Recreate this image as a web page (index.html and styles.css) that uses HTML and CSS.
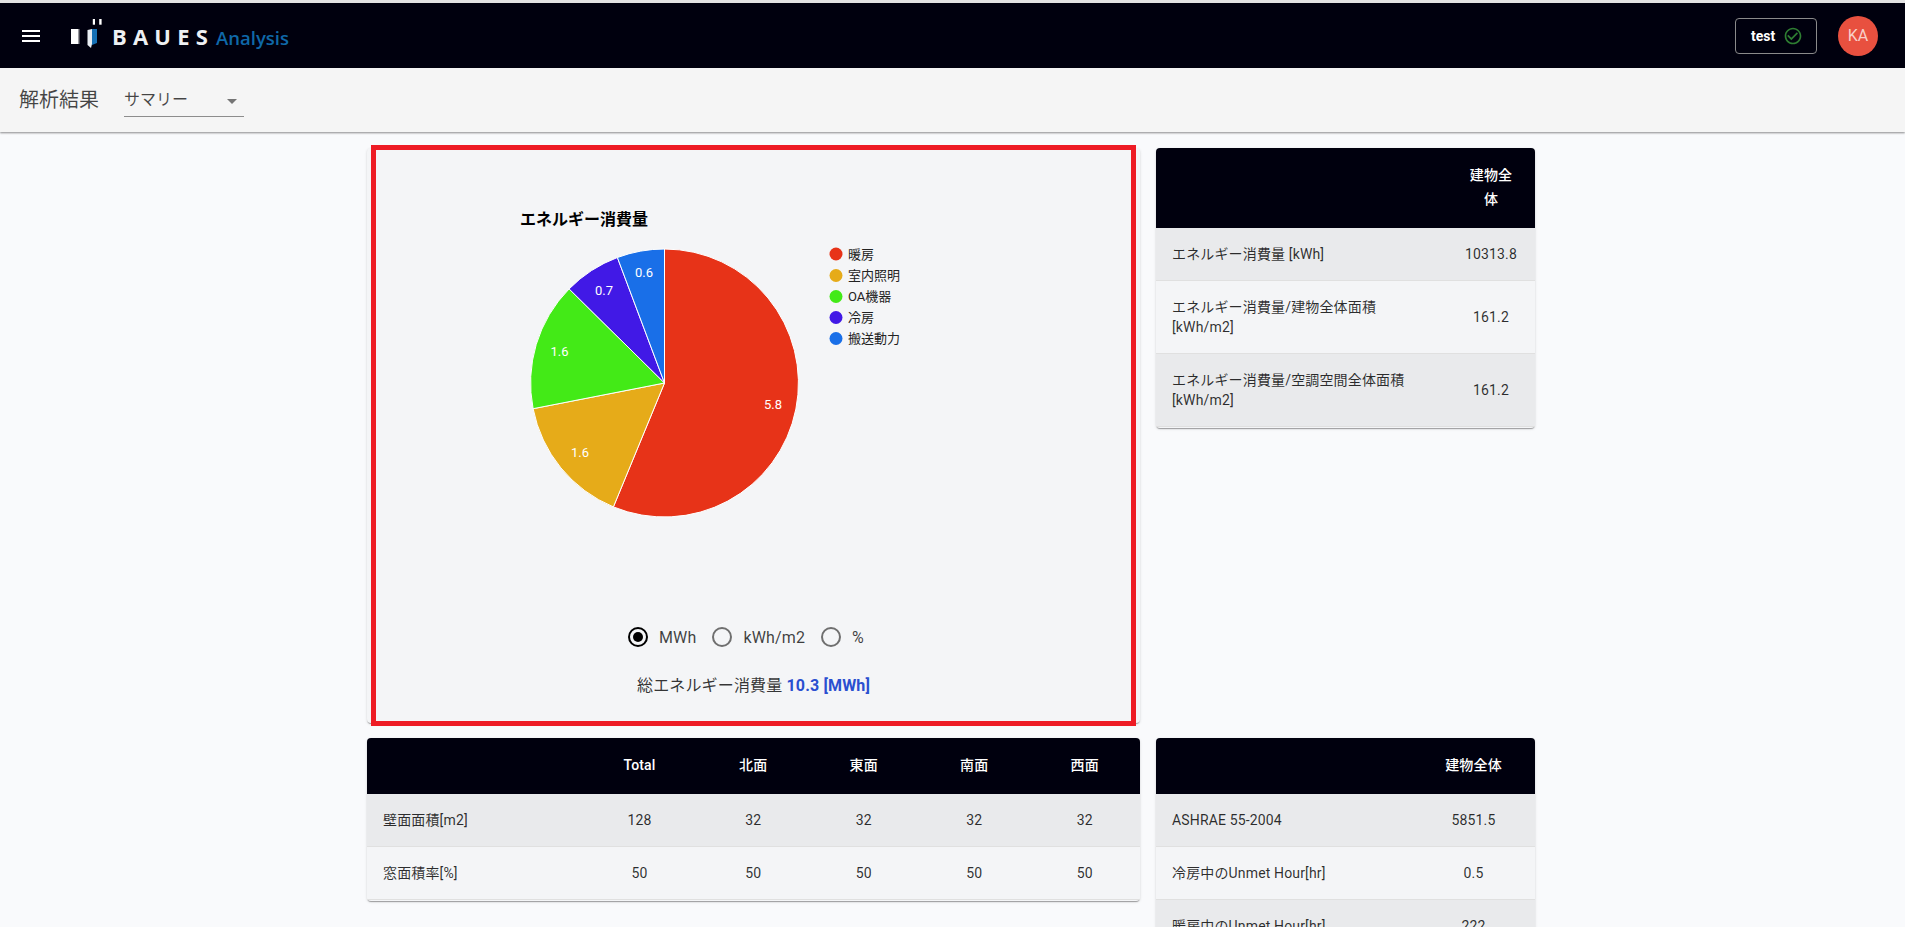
FILE: index.html
```html
<!DOCTYPE html>
<html lang="ja">
<head>
<meta charset="utf-8">
<title>BAUES Analysis</title>
<link rel="stylesheet" href="styles.css">
</head>
<body>
<header class="appbar">
  <svg class="menu-icon" viewBox="0 0 24 24" width="24" height="24"><path fill="#fff" d="M3 18h18v-2H3v2zm0-5h18v-2H3v2zm0-7v2h18V6H3z"/></svg>
  <div class="logo">
    <svg class="logo-mark" viewBox="0 0 32 32" width="32" height="32">
      <rect x="0" y="11" width="7.500" height="15" fill="#fff"/>
      <rect x="7.500" y="11" width="1.200" height="15" fill="#fff" opacity="0.4"/>
      <path d="M16.500 12 21 11V26L20 30 16.500 27Z" fill="#e8edf2"/>
      <path d="M21 11H26V25L21 27Z" fill="#1670b4"/>
      <rect x="21.800" y="1" width="2.200" height="5.700" fill="#fff"/>
      <rect x="28.200" y="1" width="2.400" height="5.700" fill="#fff"/>
    </svg>
    <span class="logo-name">BAUES</span>
    <span class="logo-sub">Analysis</span>
  </div>
  <div class="appbar-right">
    <div class="status-btn">
      <span>test</span>
      <svg viewBox="0 0 24 24" width="20" height="20"><path fill="#2e7d32" d="M16.59 7.58 10 14.17l-3.59-3.58L5 12l5 5 8-8zM12 2C6.48 2 2 6.48 2 12s4.48 10 10 10 10-4.48 10-10S17.52 2 12 2zm0 18c-4.42 0-8-3.58-8-8s3.58-8 8-8 8 3.58 8 8-3.58 8-8 8z"/></svg>
    </div>
    <div class="avatar">KA</div>
  </div>
</header>

<div class="subbar">
  <span class="subbar-title">解析結果</span>
  <div class="select">
    <span class="select-value">サマリー</span>
    <svg viewBox="0 0 24 24" width="24" height="24"><path fill="#757575" d="M7 10l5 5 5-5z"/></svg>
  </div>
</div>

<main class="content">
  <section class="card chart-card">
    <svg class="chart" viewBox="0 0 773 430" width="773" height="430">
      <text class="chart-title" x="153" y="77">エネルギー消費量</text>
      <g stroke="#fff" stroke-width="1" stroke-linejoin="round">
        <path fill="#e73318" d="M297.5 101A134 134 0 1 1 246.4 358.9L297.5 235Z"/>
        <path fill="#e6ab19" d="M246.4 358.9A134 134 0 0 1 166.1 260.7L297.5 235Z"/>
        <path fill="#43ea17" d="M166.1 260.7A134 134 0 0 1 202.1 140.9L297.5 235Z"/>
        <path fill="#4119e6" d="M202.1 140.9A134 134 0 0 1 250.4 109.5L297.5 235Z"/>
        <path fill="#196fe8" d="M250.4 109.5A134 134 0 0 1 297.5 101L297.5 235Z"/>
      </g>
      <g class="slice-label">
        <text x="406" y="261">5.8</text>
        <text x="213" y="309">1.6</text>
        <text x="192.500" y="208">1.6</text>
        <text x="237" y="147">0.7</text>
        <text x="277" y="129">0.6</text>
      </g>
      <g class="legend">
        <circle cx="469" cy="106" r="6.500" fill="#e73318"/><text x="481" y="111">暖房</text>
        <circle cx="469" cy="127.500" r="6.500" fill="#e6ab19"/><text x="481" y="132">室内照明</text>
        <circle cx="469" cy="148.500" r="6.500" fill="#43ea17"/><text x="481" y="153">OA機器</text>
        <circle cx="469" cy="169.500" r="6.500" fill="#4119e6"/><text x="481" y="174">冷房</text>
        <circle cx="469" cy="190.500" r="6.500" fill="#196fe8"/><text x="481" y="195">搬送動力</text>
      </g>
    </svg>
    <div class="radios">
      <label class="radio"><span class="radio-ring is-on"></span>MWh</label>
      <label class="radio"><span class="radio-ring"></span>kWh/m2</label>
      <label class="radio"><span class="radio-ring"></span>%</label>
    </div>
    <p class="total">総エネルギー消費量 <strong>10.3 [MWh]</strong></p>
    <div class="highlight"></div>
  </section>

  <section class="card table-card">
    <table class="table table-a">
      <thead><tr><th></th><th>建物全体</th></tr></thead>
      <tbody>
        <tr><td>エネルギー消費量 [kWh]</td><td>10313.8</td></tr>
        <tr><td>エネルギー消費量/建物全体面積 [kWh/m2]</td><td>161.2</td></tr>
        <tr><td>エネルギー消費量/空調空間全体面積 [kWh/m2]</td><td>161.2</td></tr>
      </tbody>
    </table>
  </section>

  <section class="card table-card">
    <table class="table table-b">
      <thead><tr><th></th><th>Total</th><th>北面</th><th>東面</th><th>南面</th><th>西面</th></tr></thead>
      <tbody>
        <tr><td>壁面面積[m2]</td><td>128</td><td>32</td><td>32</td><td>32</td><td>32</td></tr>
        <tr><td>窓面積率[%]</td><td>50</td><td>50</td><td>50</td><td>50</td><td>50</td></tr>
      </tbody>
    </table>
  </section>

  <section class="card table-card">
    <table class="table table-c">
      <thead><tr><th></th><th>建物全体</th></tr></thead>
      <tbody>
        <tr><td>ASHRAE 55-2004</td><td>5851.5</td></tr>
        <tr><td>冷房中のUnmet Hour[hr]</td><td>0.5</td></tr>
        <tr><td>暖房中のUnmet Hour[hr]</td><td>222</td></tr>
      </tbody>
    </table>
  </section>
</main>
</body>
</html>
```
FILE: styles.css
```css
* { box-sizing: border-box; }
html, body { margin: 0; height: 100%; overflow: hidden; }
body {
  background: #f9fafc;
  border-top: 3px solid #e3e3e3;
  font-family: Roboto, "Noto Sans CJK JP", sans-serif;
  color: rgba(0, 0, 0, 0.87);
}

.appbar {
  height: 65px;
  background: #00000e;
  display: flex;
  align-items: center;
  padding: 0 27px 0 19px;
}
.menu-icon { flex: none; }
.logo { display: flex; align-items: center; margin-left: 28px; }
.logo-mark { flex: none; margin-top: -3px; }
.logo-name {
  margin-left: 9px;
  font: 700 22px "Open Sans", sans-serif;
  letter-spacing: 6.2px;
  color: #eef0f3;
}
.logo-sub {
  margin-left: 2px;
  font: 600 18.5px "Open Sans", sans-serif;
  color: #0f68a8;
  position: relative;
  top: 2px;
}
.appbar-right { margin-left: auto; display: flex; align-items: center; gap: 21px; }
.status-btn {
  width: 82px;
  height: 36px;
  border: 1px solid #8a8a8a;
  border-radius: 4px;
  display: flex;
  align-items: center;
  gap: 8px;
  padding-left: 15px;
  color: #fff;
  font-size: 14px;
  font-weight: 700;
}
.avatar {
  width: 40px;
  height: 40px;
  border-radius: 50%;
  background: #e8503f;
  color: #f8cfc9;
  display: flex;
  align-items: center;
  justify-content: center;
  font-size: 16px;
}

.subbar {
  height: 64px;
  background: #f5f5f5;
  display: flex;
  align-items: center;
  padding-left: 19px;
  box-shadow: 0 1px 2px rgba(0, 0, 0, 0.45);
  position: relative;
}
.subbar-title { font-size: 20px; color: rgba(0, 0, 0, 0.72); width: 105px; margin-top: -3px; }
.select {
  width: 120px;
  height: 32px;
  border-bottom: 1px solid #8d8d8d;
  display: flex;
  align-items: center;
  justify-content: space-between;
  font-size: 16px;
  color: rgba(0, 0, 0, 0.72);
  margin-top: 2px;
}
.select-value { margin-top: -5px; }

.content {
  display: grid;
  grid-template-columns: 773px 379px;
  gap: 15px 16px;
  align-items: start;
  padding: 16px 0 0 367px;
}
.card {
  background: #f4f5f7;
  border-radius: 4px;
  box-shadow: 0 2px 1px -1px rgba(0, 0, 0, 0.2), 0 1px 1px 0 rgba(0, 0, 0, 0.14), 0 1px 3px 0 rgba(0, 0, 0, 0.12);
  overflow: hidden;
}
.table-card { padding-bottom: 1px; }

.chart-card { height: 575px; position: relative; overflow: visible; text-align: center; }
.chart { display: block; }
.chart-title { font-size: 16px; font-weight: 700; fill: #000; }
.slice-label text { font: 13px Roboto, "Noto Sans CJK JP", sans-serif; fill: #fff; text-anchor: middle; }
.legend text { font: 13px Roboto, "Noto Sans CJK JP", sans-serif; fill: #222; }
.radios {
  display: flex;
  padding-left: 260.5px;
  margin-top: 49px;
  font-size: 16px;
  letter-spacing: 0.15px;
  color: rgba(0, 0, 0, 0.75);
}
.radio { display: flex; align-items: center; height: 20px; margin-right: 15.5px; }
.radio-ring {
  width: 20px;
  height: 20px;
  border: 2px solid #6f6f6f;
  border-radius: 50%;
  margin-right: 11.5px;
  display: flex;
  align-items: center;
  justify-content: center;
}
.radio-ring.is-on { border-color: #000; }
.radio-ring.is-on::after { content: ""; width: 10px; height: 10px; border-radius: 50%; background: #000; }
.total { margin: 27px 0 0; font-size: 16px; line-height: 24px; letter-spacing: 0.15px; color: rgba(0, 0, 0, 0.8); }
.total strong { color: #2a4fd0; font-weight: 700; }
.highlight {
  position: absolute;
  left: 4px;
  right: 4px;
  top: -3px;
  bottom: -3px;
  border: 5px solid #ee1c25;
  pointer-events: none;
}

.table { width: 100%; border-collapse: separate; border-spacing: 0; table-layout: fixed; font-size: 14px; letter-spacing: 0.15px; }
.table th {
  background: #00000e;
  color: #fff;
  font-weight: 500;
  line-height: 24px;
  padding: 15px 16px 17px;
  text-align: center;
}
.table td {
  line-height: 20px;
  padding: 16px;
  border-bottom: 1px solid #e0e0e0;
  text-align: center;
  color: rgba(0, 0, 0, 0.82);
}
.table td:first-child { text-align: left; }
.table tbody tr:nth-child(odd) td { background: #e9eaec; }
.table tbody tr:nth-child(even) td { background: #f4f5f7; }
.table-a th:last-child { width: 88px; }
.table-b th:first-child { width: 214px; }
.table-b th:nth-child(2) { width: 117px; }
.table-c th:last-child { width: 123px; }
.table-a tbody td:last-child, .table-b tbody td:not(:first-child), .table-c tbody td:last-child { padding-left: 0; padding-right: 0; }
.table-b th:not(:first-child) { padding-left: 0; padding-right: 0; }
.table-c th:last-child { padding-left: 0; padding-right: 0; }
```
